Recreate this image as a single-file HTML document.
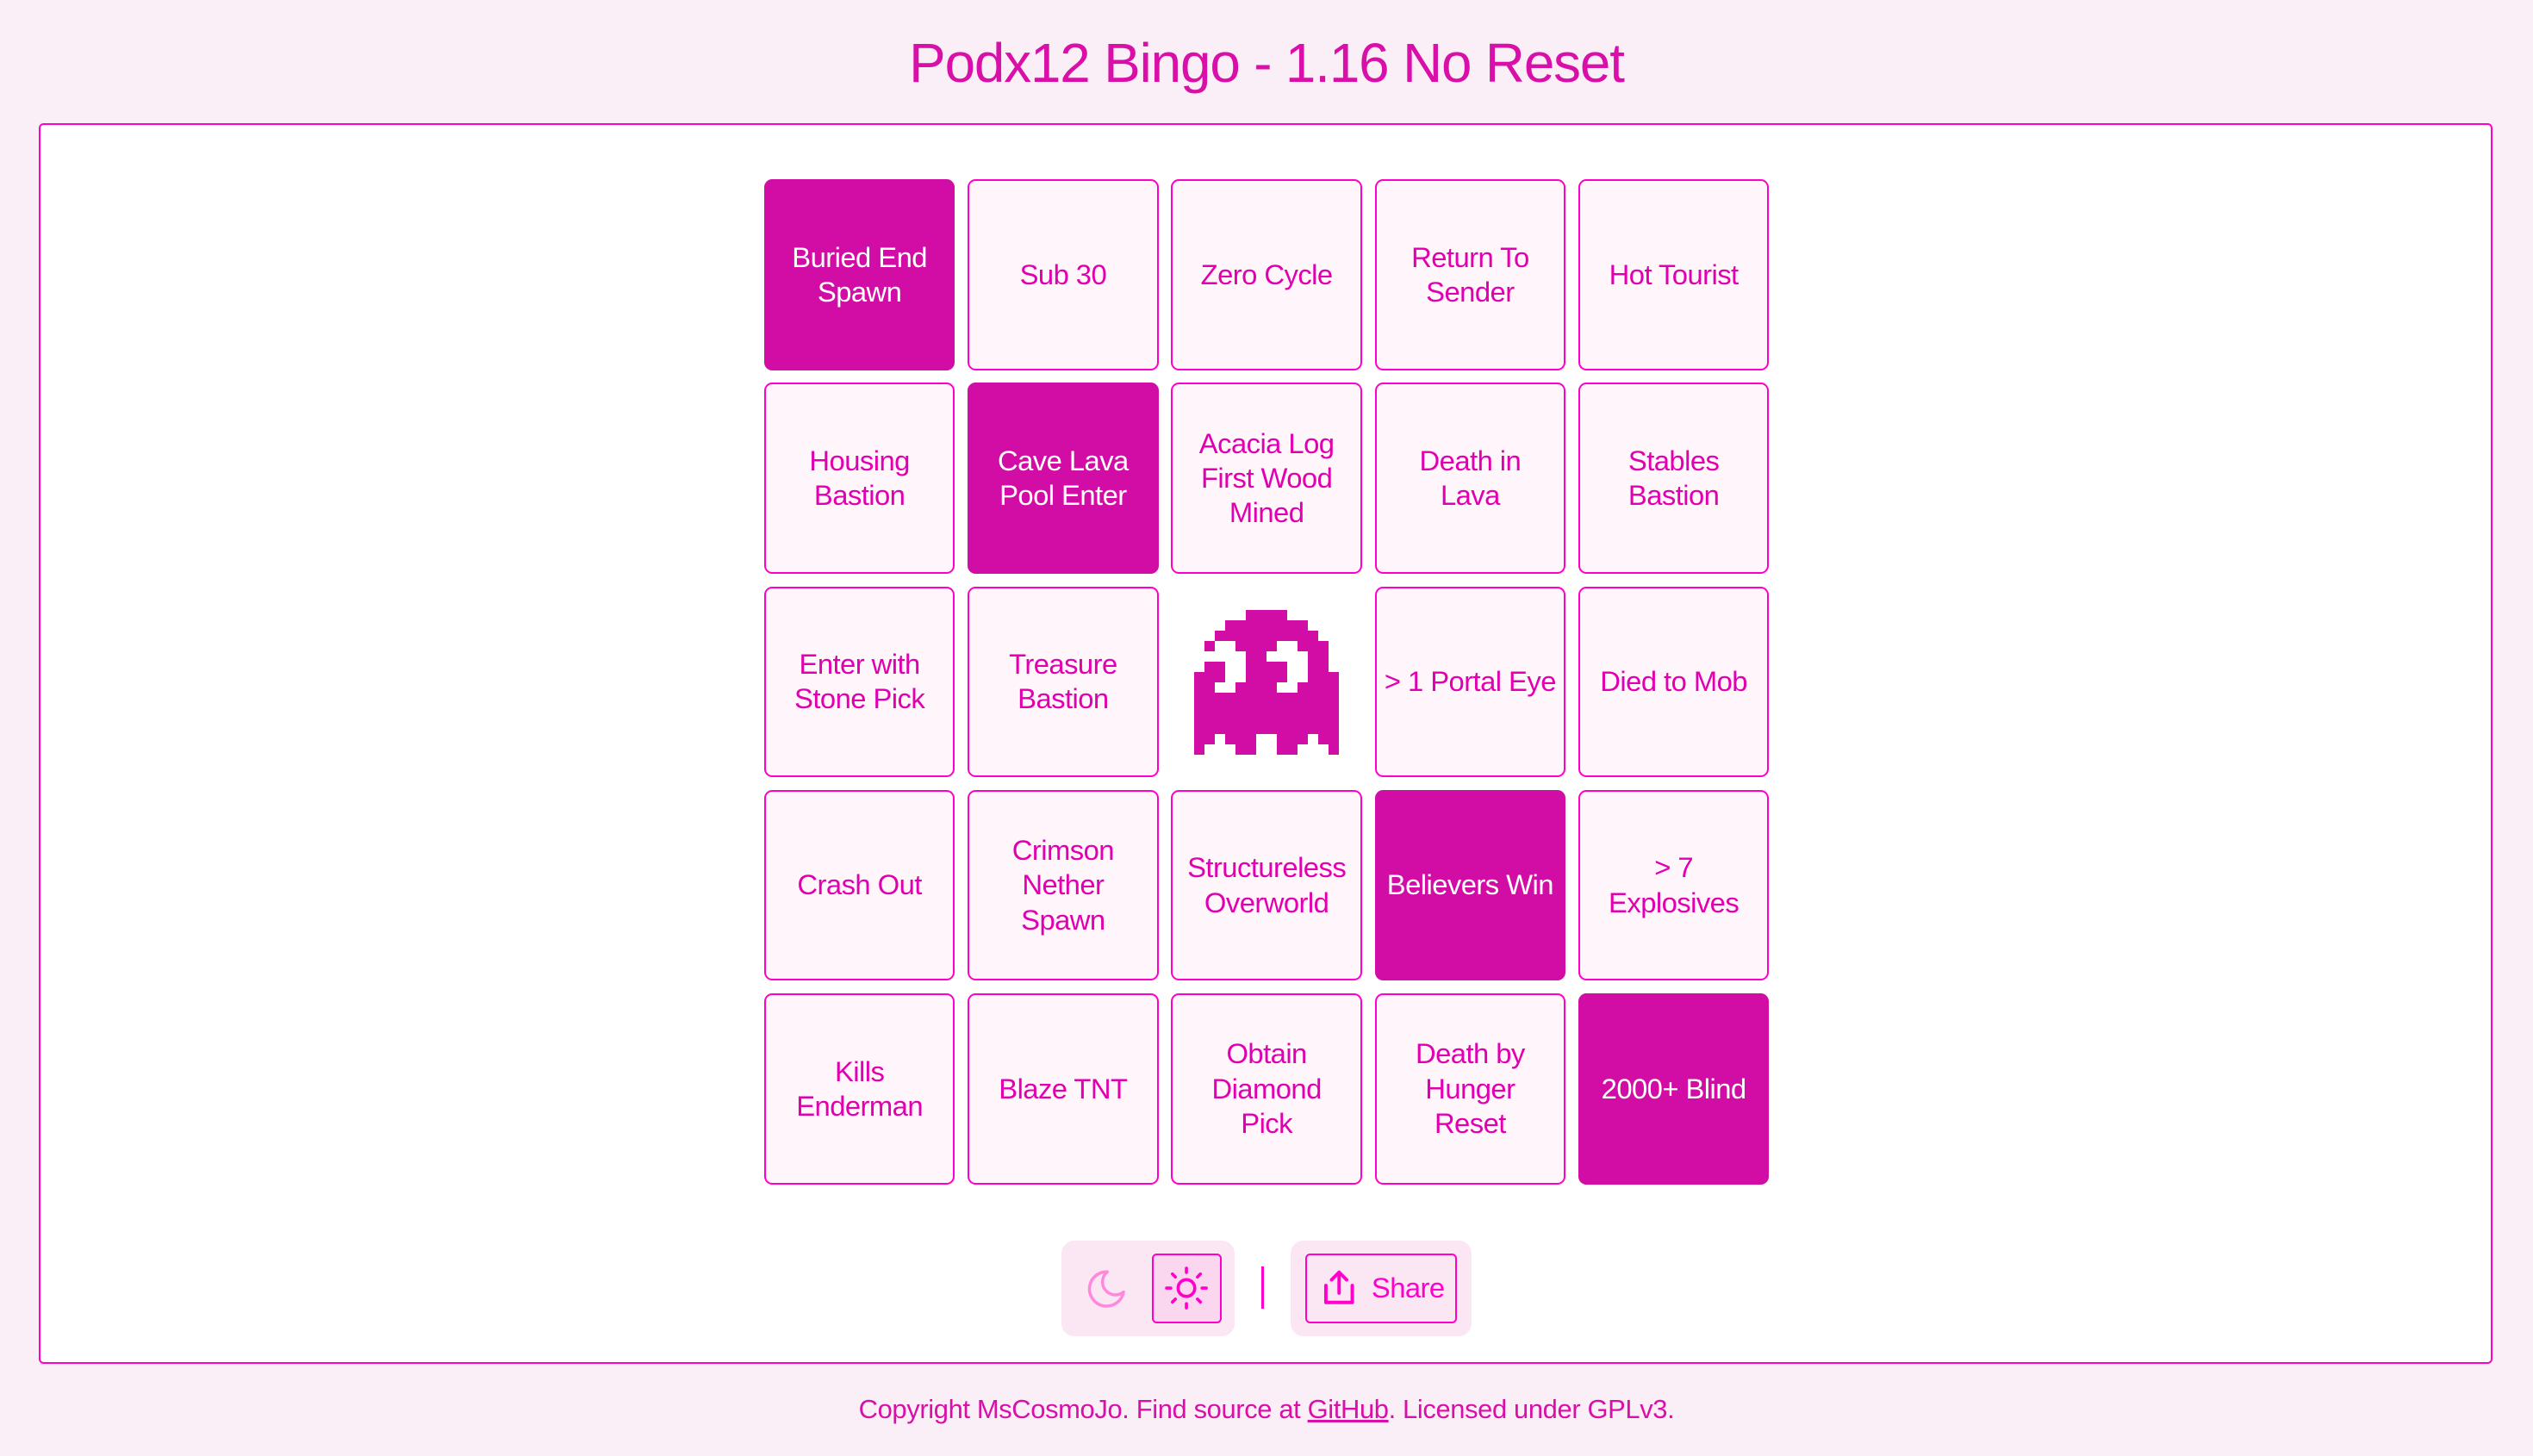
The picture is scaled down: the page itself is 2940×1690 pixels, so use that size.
<!DOCTYPE html>
<html><head><meta charset="utf-8"><style>
html{zoom:1.875}
body{margin:0;width:1568px;height:901px;background:#fbeff7;font-family:"Liberation Sans",sans-serif;color:#e000b0;position:relative;overflow:hidden}
h1{position:absolute;left:0;width:1568px;text-align:center;margin:0;top:16px;font-weight:400;font-size:34px;letter-spacing:-0.6px;color:#d80fa8;line-height:46px}
.box{position:absolute;left:24px;top:76px;width:1517px;height:766px;background:#fff;border:1.5px solid #f0c;border-radius:3px}
.c{position:absolute;width:116px;height:116px;border:1.5px solid #f0c;border-radius:5px;background:#fff6fc;display:flex;align-items:center;justify-content:center;text-align:center;font-size:17.5px;letter-spacing:-0.3px;line-height:21.5px;color:#e000b0}
.c.on{background:#d10da5;border-color:#d10da5;color:#fff}
.c.g{background:#fff;border-color:#fff}
.grp{position:absolute;top:768px;height:59px;background:#fbe6f4;border-radius:8px}
.btn{position:absolute;border:1.5px solid #f0c;border-radius:3px;box-sizing:border-box}
.ft{position:absolute;top:863px;width:1568px;text-align:center;font-size:16.5px;letter-spacing:-0.2px;color:#d80fa8}
</style></head><body>
<h1>Podx12 Bingo - 1.16 No Reset</h1>
<div class="box"></div>
<div class="c on" style="left:473px;top:111px">Buried End<br>Spawn</div>
<div class="c" style="left:599px;top:111px">Sub 30</div>
<div class="c" style="left:725px;top:111px">Zero Cycle</div>
<div class="c" style="left:851px;top:111px">Return To<br>Sender</div>
<div class="c" style="left:977px;top:111px">Hot Tourist</div>
<div class="c" style="left:473px;top:237px">Housing<br>Bastion</div>
<div class="c on" style="left:599px;top:237px">Cave Lava<br>Pool Enter</div>
<div class="c" style="left:725px;top:237px">Acacia Log<br>First Wood<br>Mined</div>
<div class="c" style="left:851px;top:237px">Death in<br>Lava</div>
<div class="c" style="left:977px;top:237px">Stables<br>Bastion</div>
<div class="c" style="left:473px;top:363px">Enter with<br>Stone Pick</div>
<div class="c" style="left:599px;top:363px">Treasure<br>Bastion</div>
<div class="c g" style="left:725px;top:363px"><svg width="89.6" height="89.6" viewBox="0 0 14 14" shape-rendering="crispEdges" style="margin-top:1px" fill="#d10da5">
<rect x="5" y="0" width="4" height="1"/><rect x="3" y="1" width="8" height="1"/><rect x="2" y="2" width="10" height="1"/>
<rect x="1" y="3" width="1" height="1"/><rect x="4" y="3" width="4" height="1"/><rect x="10" y="3" width="3" height="1"/>
<rect x="5" y="4" width="2" height="1"/><rect x="11" y="4" width="2" height="1"/>
<rect x="1" y="5" width="2" height="1"/><rect x="5" y="5" width="4" height="1"/><rect x="11" y="5" width="2" height="1"/>
<rect x="0" y="6" width="3" height="1"/><rect x="5" y="6" width="4" height="1"/><rect x="11" y="6" width="3" height="1"/>
<rect x="0" y="7" width="2" height="1"/><rect x="4" y="7" width="4" height="1"/><rect x="10" y="7" width="4" height="1"/>
<rect x="0" y="8" width="14" height="4"/>
<rect x="0" y="12" width="2" height="1"/><rect x="3" y="12" width="3" height="1"/><rect x="8" y="12" width="3" height="1"/><rect x="12" y="12" width="2" height="1"/>
<rect x="0" y="13" width="1" height="1"/><rect x="4" y="13" width="2" height="1"/><rect x="8" y="13" width="2" height="1"/><rect x="13" y="13" width="1" height="1"/>
</svg></div>
<div class="c" style="left:851px;top:363px">&gt; 1 Portal Eye</div>
<div class="c" style="left:977px;top:363px">Died to Mob</div>
<div class="c" style="left:473px;top:489px">Crash Out</div>
<div class="c" style="left:599px;top:489px">Crimson<br>Nether<br>Spawn</div>
<div class="c" style="left:725px;top:489px">Structureless<br>Overworld</div>
<div class="c on" style="left:851px;top:489px">Believers Win</div>
<div class="c" style="left:977px;top:489px">&gt; 7<br>Explosives</div>
<div class="c" style="left:473px;top:615px">Kills<br>Enderman</div>
<div class="c" style="left:599px;top:615px">Blaze TNT</div>
<div class="c" style="left:725px;top:615px">Obtain<br>Diamond<br>Pick</div>
<div class="c" style="left:851px;top:615px">Death by<br>Hunger<br>Reset</div>
<div class="c on" style="left:977px;top:615px">2000+ Blind</div>

<div class="grp" style="left:657px;width:107px"></div>
<svg style="position:absolute;left:670px;top:783px" width="30" height="30" viewBox="0 0 24 24" fill="none" stroke="#ff88dd" stroke-width="1.5" stroke-linecap="round" stroke-linejoin="round"><path d="M12.5 3.5A8.5 8.5 0 1 0 20.5 13.5A6 6 0 0 1 12.5 3.5Z"/></svg>
<div class="btn" style="left:713px;top:776px;width:43px;height:43px;background:#fbd6ef"></div>
<svg style="position:absolute;left:719px;top:782px" width="31" height="31" viewBox="0 0 24 24" fill="none" stroke="#f0c" stroke-width="1.5" stroke-linecap="round"><circle cx="12" cy="12" r="4"/><path d="M12 2.5v2M12 19.5v2M2.5 12h2M19.5 12h2M5.3 5.3l1.4 1.4M17.3 17.3l1.4 1.4M5.3 18.7l1.4-1.4M17.3 6.7l1.4-1.4"/></svg>
<div style="position:absolute;left:781px;top:784px;width:1.5px;height:26px;background:#f0c"></div>
<div class="grp" style="left:799px;width:112px"></div>
<div class="btn" style="left:808px;top:776px;width:94px;height:43px"></div>
<svg style="position:absolute;left:815px;top:783px" width="28" height="28" viewBox="0 0 24 24" fill="none" stroke="#f0c" stroke-width="1.8" stroke-linecap="round" stroke-linejoin="round"><path d="M5 11v9h14v-9M12 15V4M8 8l4-4 4 4"/></svg>
<div style="position:absolute;left:849px;top:787px;font-size:17.5px;letter-spacing:-0.3px;color:#f0c">Share</div>
<div class="ft">Copyright MsCosmoJo. Find source at <u>GitHub</u>. Licensed under GPLv3.</div>
</body></html>
